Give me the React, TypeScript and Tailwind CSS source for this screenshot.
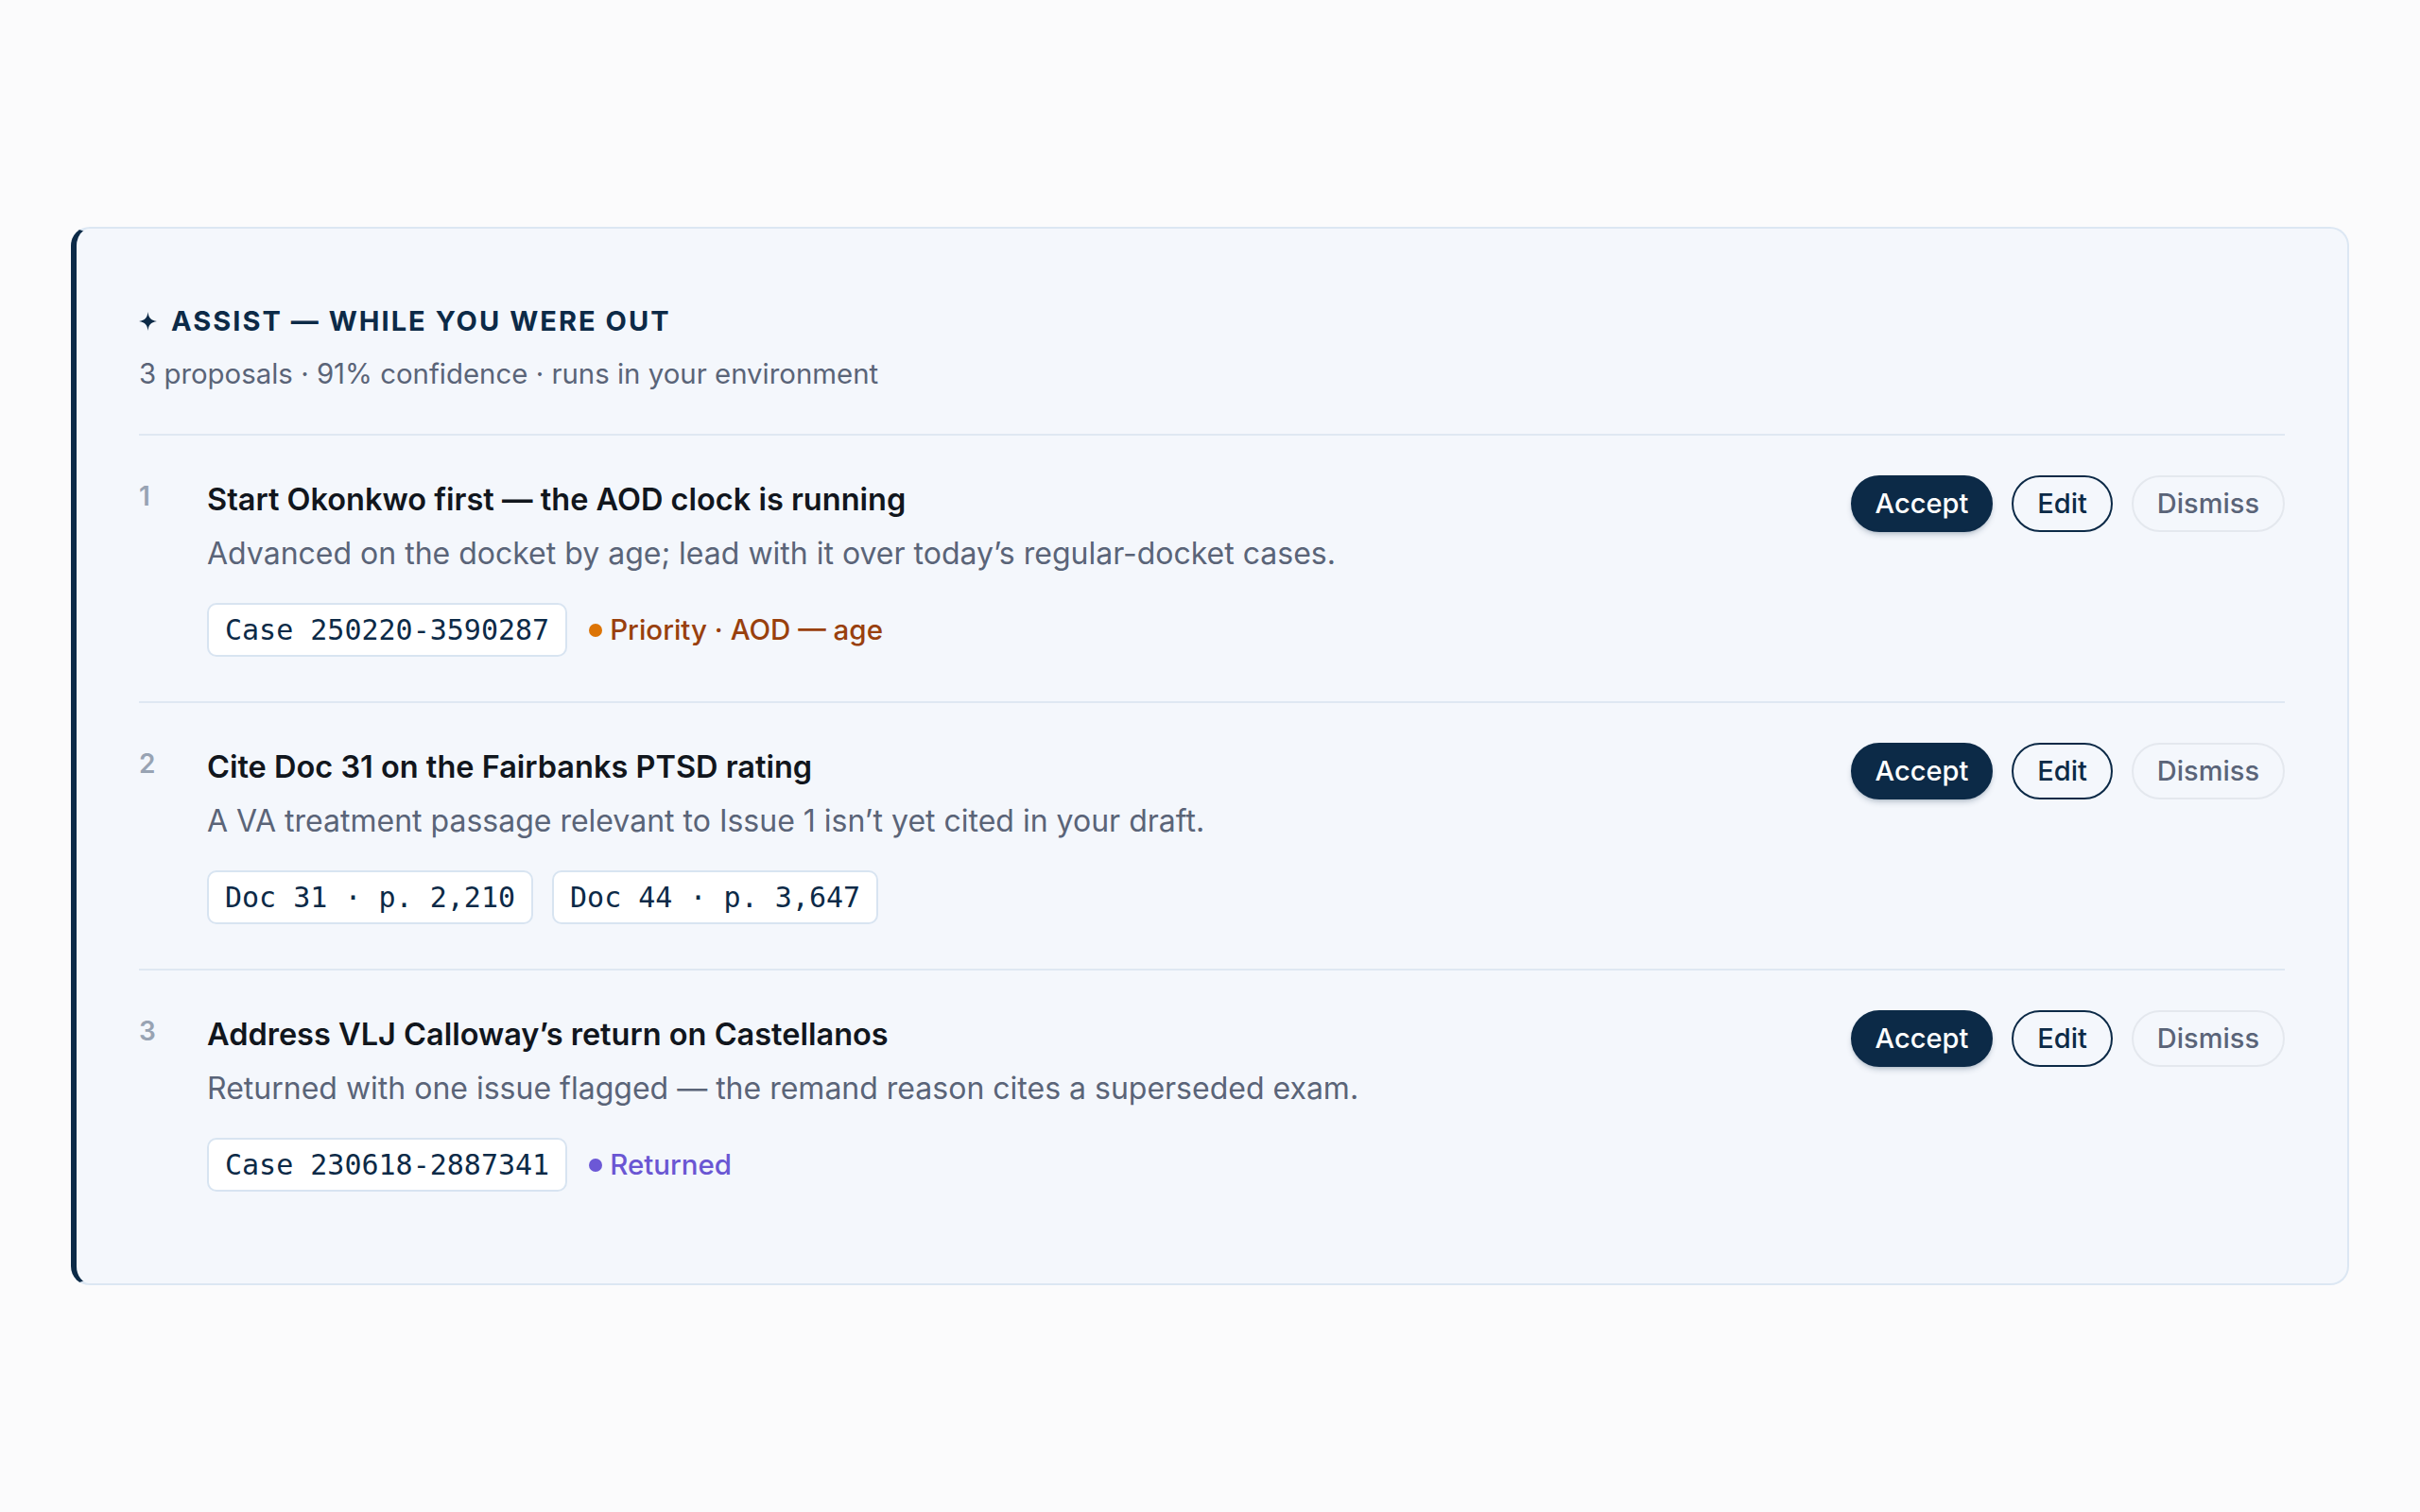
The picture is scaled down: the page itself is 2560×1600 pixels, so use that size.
import React from "react";

type Tag =
  | { kind: "chip"; text: string }
  | { kind: "status"; text: string; tone: "amber" | "violet" };

type Proposal = {
  n: number;
  title: string;
  body: string;
  tags: Tag[];
};

const proposals: Proposal[] = [
  {
    n: 1,
    title: "Start Okonkwo first — the AOD clock is running",
    body: "Advanced on the docket by age; lead with it over today’s regular-docket cases.",
    tags: [
      { kind: "chip", text: "Case 250220-3590287" },
      { kind: "status", text: "Priority · AOD — age", tone: "amber" },
    ],
  },
  {
    n: 2,
    title: "Cite Doc 31 on the Fairbanks PTSD rating",
    body: "A VA treatment passage relevant to Issue 1 isn’t yet cited in your draft.",
    tags: [
      { kind: "chip", text: "Doc 31 · p. 2,210" },
      { kind: "chip", text: "Doc 44 · p. 3,647" },
    ],
  },
  {
    n: 3,
    title: "Address VLJ Calloway’s return on Castellanos",
    body: "Returned with one issue flagged — the remand reason cites a superseded exam.",
    tags: [
      { kind: "chip", text: "Case 230618-2887341" },
      { kind: "status", text: "Returned", tone: "violet" },
    ],
  },
];

const sans = { fontFamily: "Inter, 'Noto Sans', sans-serif" };

function Sparkle() {
  return (
    <svg width="19" height="20" viewBox="0 0 18 19" className="shrink-0">
      <path
        d="M9 0 C9.6 5.6 11.6 8.4 18 9.5 C11.6 10.6 9.6 13.4 9 19 C8.4 13.4 6.4 10.6 0 9.5 C6.4 8.4 8.4 5.6 9 0 Z"
        fill="#0c2a47"
      />
    </svg>
  );
}

function TagView({ tag }: { tag: Tag }) {
  if (tag.kind === "chip") {
    return (
      <span
        className="flex h-[57px] items-center rounded-[10px] border-2 border-[#d8e4f1] bg-white px-[17px] text-[30px] whitespace-pre text-[#0c2a47]"
        style={{ fontFamily: "'DejaVu Sans Mono', monospace" }}
      >
        {tag.text}
      </span>
    );
  }
  const amber = tag.tone === "amber";
  return (
    <span
      className={`ml-[3px] flex items-center gap-[8px] text-[29.5px] font-medium ${
        amber ? "text-[#99400d]" : "text-[#6a56d3]"
      }`}
    >
      <span
        className={`inline-block h-[14px] w-[14px] rounded-full ${
          amber ? "bg-[#dc7406]" : "bg-[#6c58d6]"
        }`}
      />
      {tag.text}
    </span>
  );
}

function ProposalRow({ p, last }: { p: Proposal; last: boolean }) {
  return (
    <div
      className={`flex items-start pt-[42px] pb-[47px] ${
        last ? "" : "border-b-2 border-[#dfe8f2]"
      }`}
    >
      <div className="mt-[4px] w-[72px] shrink-0 text-[28px] leading-[36px] font-semibold text-[#98a3b3]">
        {p.n}
      </div>
      <div className="min-w-0 flex-1">
        <p className="mt-[7px] text-[32.5px] leading-[38px] font-semibold text-[#11161d]">
          {p.title}
        </p>
        <p className="mt-[18px] text-[32px] leading-[40px] text-[#5a6478]">
          {p.body}
        </p>
        <div className="mt-[32px] flex items-center gap-[20px]">
          {p.tags.map((t, i) => (
            <TagView key={i} tag={t} />
          ))}
        </div>
      </div>
      <div className="flex shrink-0 items-center gap-[20px]">
        <button className="h-[60px] rounded-full border-2 border-[#0c2a47] bg-[#0c2a47] px-[24px] text-[29px] font-medium text-white shadow-md shadow-[#0c2a47]/20">
          Accept
        </button>
        <button className="h-[60px] rounded-full border-2 border-[#0c2a47] px-[25px] text-[29px] font-medium text-[#0c2a47]">
          Edit
        </button>
        <button className="h-[60px] rounded-full border-2 border-[#e4e8ee] px-[25px] text-[29px] font-medium text-[#5a6478]">
          Dismiss
        </button>
      </div>
    </div>
  );
}

export default function App() {
  return (
    <div
      className="flex min-h-screen items-center bg-[#fbfbfc] px-[75px]"
      style={sans}
    >
      <section className="w-full rounded-[20px] border-2 border-l-[6px] border-[#dce7f3] border-l-[#0c2a47] bg-[#f4f7fc] pt-[80px] pr-[66px] pb-[50px] pl-[66px]">
        <div className="border-b-2 border-[#dfe8f2] pb-[45px]">
          <div className="flex items-center gap-[15px]">
            <Sparkle />
            <h2 className="text-[29px] leading-[36px] font-bold tracking-[0.07em] text-[#0c2a47] uppercase">
              Assist — While you were out
            </h2>
          </div>
          <p className="mt-[20px] text-[29.4px] leading-[36px] text-[#5a6478]">
            3 proposals · 91% confidence · runs in your environment
          </p>
        </div>
        {proposals.map((p, i) => (
          <ProposalRow key={p.n} p={p} last={i === proposals.length - 1} />
        ))}
      </section>
    </div>
  );
}
